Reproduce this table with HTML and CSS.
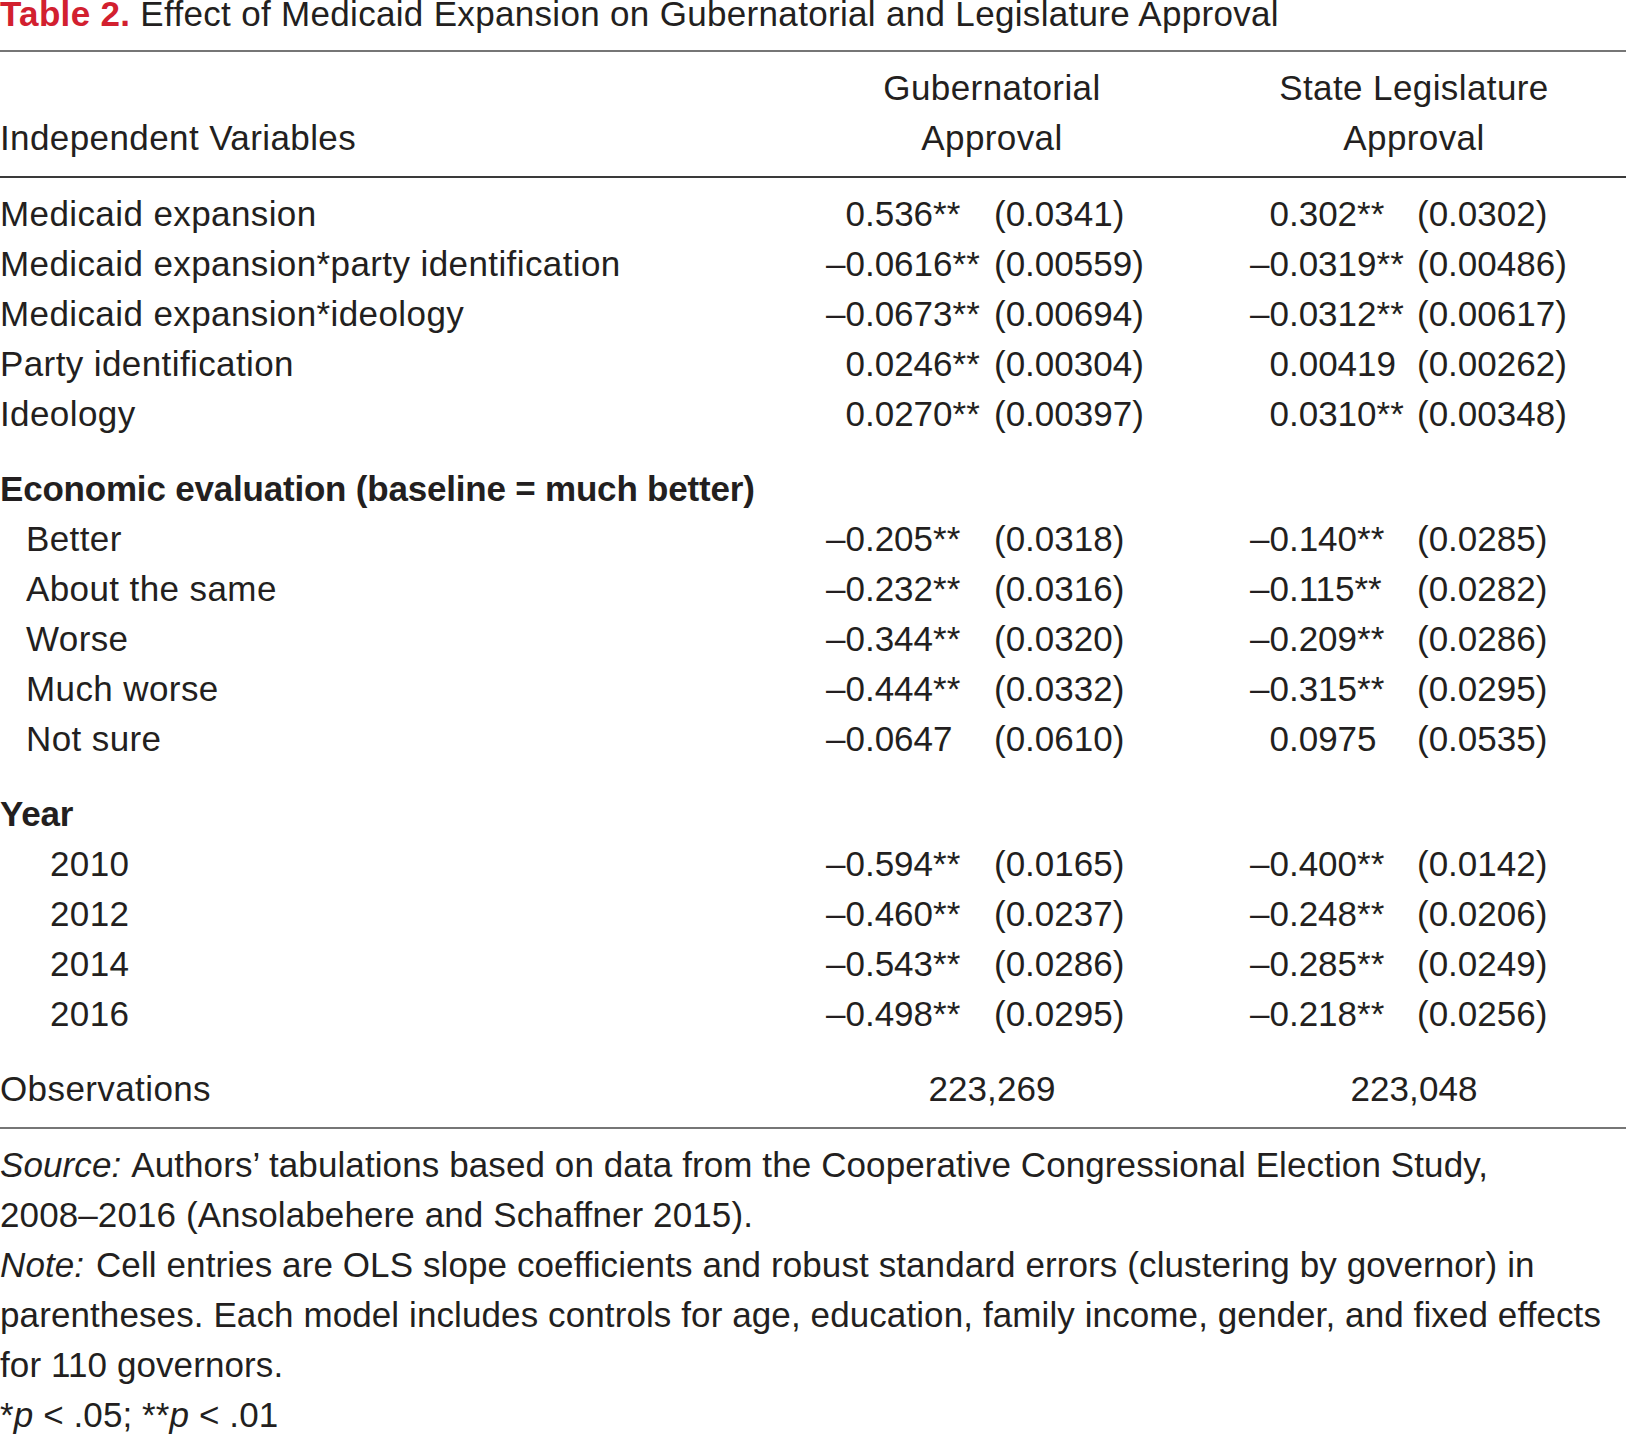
FILE: index.html
```html
<!DOCTYPE html>
<html lang="en">
<head>
<meta charset="utf-8">
<title>Table 2</title>
<link rel="stylesheet" href="styles.css">
</head>
<body>
<div class="page">
  <h1 class="title"><span class="title-label">Table 2.</span> Effect of Medicaid Expansion on Gubernatorial and Legislature Approval</h1>
  <div class="table">
    <div class="thead">
      <div class="label head-label">Independent Variables</div>
      <div class="col-a center">Gubernatorial<br>Approval</div>
      <div class="col-b center">State Legislature<br>Approval</div>
    </div>
    <div class="tbody">
      <div class="row">
        <div class="label">Medicaid expansion</div>
        <div class="col-a cell"><span class="coef pos">0.536**</span><span class="se">(0.0341)</span></div>
        <div class="col-b cell"><span class="coef pos">0.302**</span><span class="se">(0.0302)</span></div>
      </div>
      <div class="row">
        <div class="label">Medicaid expansion*party identification</div>
        <div class="col-a cell"><span class="coef">–0.0616**</span><span class="se">(0.00559)</span></div>
        <div class="col-b cell"><span class="coef">–0.0319**</span><span class="se">(0.00486)</span></div>
      </div>
      <div class="row">
        <div class="label">Medicaid expansion*ideology</div>
        <div class="col-a cell"><span class="coef">–0.0673**</span><span class="se">(0.00694)</span></div>
        <div class="col-b cell"><span class="coef">–0.0312**</span><span class="se">(0.00617)</span></div>
      </div>
      <div class="row">
        <div class="label">Party identification</div>
        <div class="col-a cell"><span class="coef pos">0.0246**</span><span class="se">(0.00304)</span></div>
        <div class="col-b cell"><span class="coef pos">0.00419</span><span class="se">(0.00262)</span></div>
      </div>
      <div class="row">
        <div class="label">Ideology</div>
        <div class="col-a cell"><span class="coef pos">0.0270**</span><span class="se">(0.00397)</span></div>
        <div class="col-b cell"><span class="coef pos">0.0310**</span><span class="se">(0.00348)</span></div>
      </div>

      <div class="row section">
        <div class="label bold">Economic evaluation (baseline = much better)</div>
      </div>
      <div class="row">
        <div class="label indent-1">Better</div>
        <div class="col-a cell"><span class="coef">–0.205**</span><span class="se">(0.0318)</span></div>
        <div class="col-b cell"><span class="coef">–0.140**</span><span class="se">(0.0285)</span></div>
      </div>
      <div class="row">
        <div class="label indent-1">About the same</div>
        <div class="col-a cell"><span class="coef">–0.232**</span><span class="se">(0.0316)</span></div>
        <div class="col-b cell"><span class="coef">–0.115**</span><span class="se">(0.0282)</span></div>
      </div>
      <div class="row">
        <div class="label indent-1">Worse</div>
        <div class="col-a cell"><span class="coef">–0.344**</span><span class="se">(0.0320)</span></div>
        <div class="col-b cell"><span class="coef">–0.209**</span><span class="se">(0.0286)</span></div>
      </div>
      <div class="row">
        <div class="label indent-1">Much worse</div>
        <div class="col-a cell"><span class="coef">–0.444**</span><span class="se">(0.0332)</span></div>
        <div class="col-b cell"><span class="coef">–0.315**</span><span class="se">(0.0295)</span></div>
      </div>
      <div class="row">
        <div class="label indent-1">Not sure</div>
        <div class="col-a cell"><span class="coef">–0.0647</span><span class="se">(0.0610)</span></div>
        <div class="col-b cell"><span class="coef pos">0.0975</span><span class="se">(0.0535)</span></div>
      </div>

      <div class="row section">
        <div class="label bold">Year</div>
      </div>
      <div class="row">
        <div class="label indent-2">2010</div>
        <div class="col-a cell"><span class="coef">–0.594**</span><span class="se">(0.0165)</span></div>
        <div class="col-b cell"><span class="coef">–0.400**</span><span class="se">(0.0142)</span></div>
      </div>
      <div class="row">
        <div class="label indent-2">2012</div>
        <div class="col-a cell"><span class="coef">–0.460**</span><span class="se">(0.0237)</span></div>
        <div class="col-b cell"><span class="coef">–0.248**</span><span class="se">(0.0206)</span></div>
      </div>
      <div class="row">
        <div class="label indent-2">2014</div>
        <div class="col-a cell"><span class="coef">–0.543**</span><span class="se">(0.0286)</span></div>
        <div class="col-b cell"><span class="coef">–0.285**</span><span class="se">(0.0249)</span></div>
      </div>
      <div class="row">
        <div class="label indent-2">2016</div>
        <div class="col-a cell"><span class="coef">–0.498**</span><span class="se">(0.0295)</span></div>
        <div class="col-b cell"><span class="coef">–0.218**</span><span class="se">(0.0256)</span></div>
      </div>

      <div class="row section">
        <div class="label">Observations</div>
        <div class="col-a center num">223,269</div>
        <div class="col-b center num">223,048</div>
      </div>
    </div>
  </div>
  <div class="notes">
    <p><em class="lead">Source:</em> Authors’ tabulations based on data from the Cooperative Congressional Election Study, <span class="nowrap">2008–2016</span> (Ansolabehere and Schaffner 2015).</p>
    <p><em class="lead">Note:</em> Cell entries are OLS slope coefficients and robust standard errors (clustering by governor) in parentheses. Each model includes controls for age, education, family income, gender, and fixed effects for 110 governors.</p>
    <p>*<em>p</em> &lt; .05; **<em>p</em> &lt; .01</p>
  </div>
</div>
</body>
</html>
```

FILE: styles.css
```css
html, body {
  margin: 0;
  padding: 0;
  background: #ffffff;
}

body {
  font-family: "Liberation Sans", Arial, Helvetica, sans-serif;
  font-size: 35px;
  color: #231f20;
  letter-spacing: 0.4px;
}

.page {
  width: 1626px;
}

.title {
  margin: 0;
  font-size: 35px;
  font-weight: normal;
  line-height: 28px;
  letter-spacing: 0.32px;
  white-space: nowrap;
}

.title-label {
  color: #d2202f;
  font-weight: bold;
}

.table {
  margin-top: 22px;
  border-top: 2px solid #767676;
  border-bottom: 2px solid #767676;
}

.thead,
.row {
  display: grid;
  grid-template-columns: 826px 332px 92px 328px;
  line-height: 50px;
}

.thead {
  padding: 11px 0 13px;
  border-bottom: 2px solid #3a3a3a;
}

.tbody {
  padding: 11px 0 13px;
}

.label {
  grid-column: 1;
  white-space: nowrap;
}

.head-label {
  align-self: end;
}

.col-a {
  grid-column: 2;
}

.col-b {
  grid-column: 4;
}

.center {
  text-align: center;
}

.cell {
  display: flex;
  white-space: nowrap;
  letter-spacing: 0;
}

.num {
  letter-spacing: 0.1px;
}

.col-a .coef {
  width: 168px;
  flex: none;
}

.col-b .coef {
  width: 167px;
  flex: none;
}

.coef.pos {
  padding-left: 19.5px;
  box-sizing: border-box;
}

.section {
  margin-top: 25px;
}

.bold {
  font-weight: bold;
  letter-spacing: -0.2px;
}

.indent-1 {
  padding-left: 26px;
}

.indent-2 {
  padding-left: 50px;
}

.notes {
  padding-top: 11px;
  line-height: 50px;
  letter-spacing: 0.1px;
}

.notes p {
  margin: 0;
}

.lead {
  padding-right: 2px;
}

.nowrap {
  white-space: nowrap;
}
```
